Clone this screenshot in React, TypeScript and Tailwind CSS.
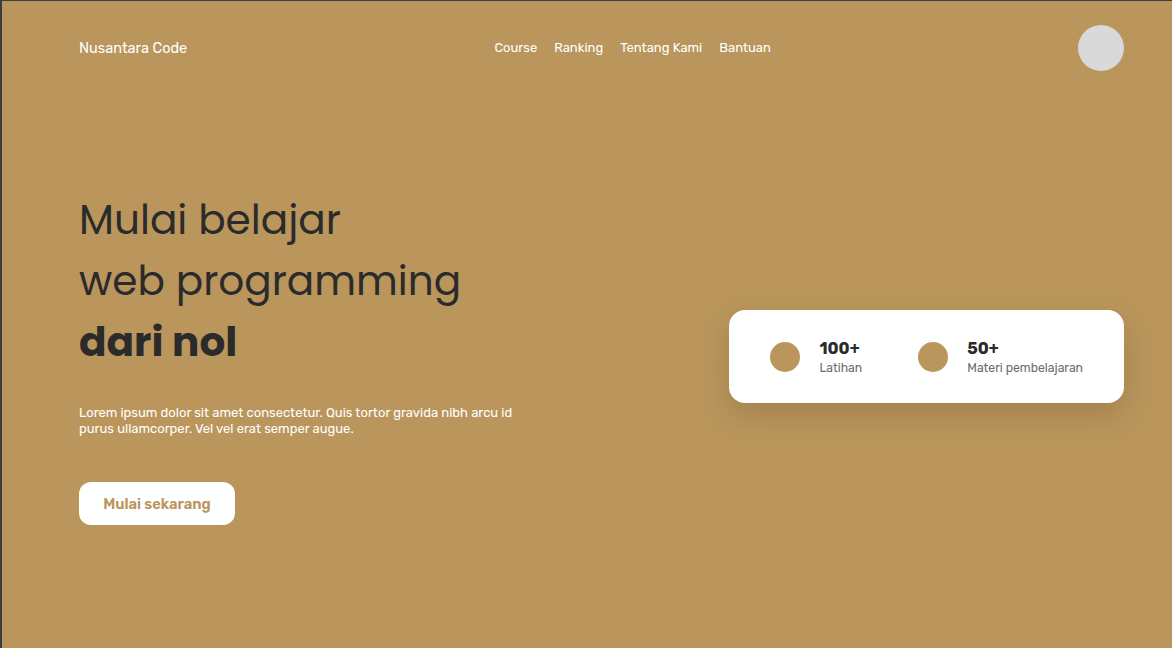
const stats = [
  { value: "100+", label: "Latihan" },
  { value: "50+", label: "Materi pembelajaran" },
];

const links = ["Course", "Ranking", "Tentang Kami", "Bantuan"];

const App = () => {
  return (
    <div
      className="w-full h-[648px] bg-[#ba965c] border-l-2 border-t border-[#3b3d40] overflow-hidden"
      style={{ fontFamily: "Rubik, Inter, 'Noto Sans', sans-serif" }}
    >
      <nav className="flex items-center justify-between pl-[77px] pr-[48px] pt-6">
        <div className="text-white text-[14.5px] pt-px">Nusantara Code</div>
        <ul className="flex gap-[17px] text-white text-[13px]">
          {links.map((l) => (
            <li key={l}>{l}</li>
          ))}
        </ul>
        <div className="w-[46px] h-[46px] rounded-full bg-[#d9d9d9]" />
      </nav>

      <section className="flex items-center justify-between pl-[77px] pr-[48px] mt-[118px]">
        <div>
          <h1
            className="text-[#2b2b2b] text-[40.6px] leading-[61px]"
            style={{ fontFamily: "Poppins, 'Noto Sans', sans-serif" }}
          >
            Mulai belajar
            <br />
            web programming
            <br />
            <span className="font-bold">dari nol</span>
          </h1>
          <p className="text-white text-[13px] leading-4 w-[450px] mt-[33px]">
            Lorem ipsum dolor sit amet consectetur. Quis tortor gravida nibh arcu id
            purus ullamcorper. Vel vel erat semper augue.
          </p>
          <button className="mt-[45px] w-[156px] h-[43px] rounded-xl bg-white text-[#ba965c] text-[14.7px] font-semibold pt-px">
            Mulai sekarang
          </button>
        </div>

        <div className="bg-white rounded-2xl px-[41px] pt-[28px] pb-[26px] flex gap-14 shadow-[0_12px_30px_rgba(60,40,10,0.18)] -mt-[2px]">
          {stats.map((s) => (
            <div key={s.value} className="flex items-center gap-[19px]">
              <div className="w-[30px] h-[30px] rounded-full bg-[#ba965c]" />
              <div>
                <div className="text-[#2b2b2b] text-[16.3px] font-bold leading-[22px]">{s.value}</div>
                <div className="text-[#6b6b6b] text-[12.2px] leading-[17px]">{s.label}</div>
              </div>
            </div>
          ))}
        </div>
      </section>
    </div>
  );
};

export default App;
